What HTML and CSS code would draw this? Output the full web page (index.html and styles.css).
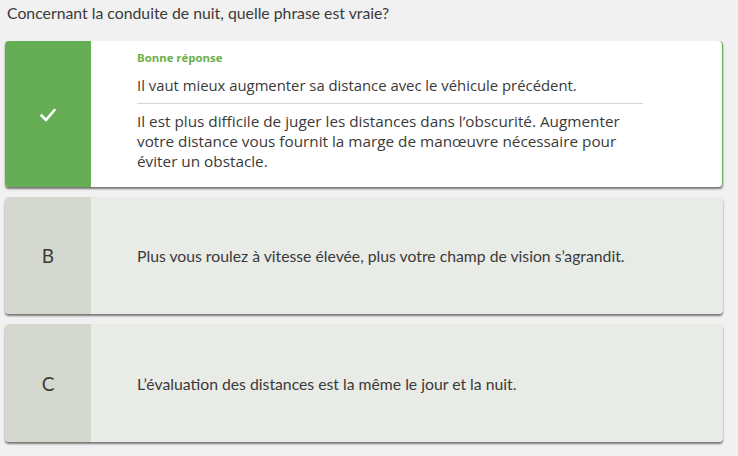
FILE: index.html
```html
<!DOCTYPE html>
<html lang="fr">
<head>
<meta charset="utf-8">
<link rel="stylesheet" href="styles.css">
</head>
<body>
<div class="page">
  <p class="question">Concernant la conduite de nuit, quelle phrase est vraie?</p>
  <div class="answers">
    <div class="card card-correct">
      <div class="side side-correct">
        <svg class="check" width="16" height="14" viewBox="0 0 16 14"><path d="M1.5 7.5 L6 12 L14.5 2" fill="none" stroke="#fff" stroke-width="2.6" stroke-linecap="round" stroke-linejoin="round"/></svg>
      </div>
      <div class="body body-correct">
        <div class="label">Bonne réponse</div>
        <div class="answer-text">Il vaut mieux augmenter sa distance avec le véhicule précédent.</div>
        <div class="sep"></div>
        <div class="explain">Il est plus difficile de juger les distances dans l’obscurité. Augmenter votre distance vous fournit la marge de manœuvre nécessaire pour éviter un obstacle.</div>
      </div>
    </div>
    <div class="card card-b">
      <div class="side">B</div>
      <div class="body"><span class="plain">Plus vous roulez à vitesse élevée, plus votre champ de vision s’agrandit.</span></div>
    </div>
    <div class="card card-c">
      <div class="side">C</div>
      <div class="body"><span class="plain">L’évaluation des distances est la même le jour et la nuit.</span></div>
    </div>
  </div>
</div>
</body>
</html>
```
FILE: styles.css
```css
html, body {
  margin: 0;
  padding: 0;
  background: #f1f1f1;
}
.page {
  width: 738px;
  height: 456px;
  font-family: Lato, "Liberation Sans", sans-serif;
  color: #333;
}
.question {
  margin: 0;
  padding: 3px 0 0 7px;
  font-size: 15.8px;
  line-height: 20px;
  color: #3a3a3a;
}
.answers {
  display: flex;
  flex-direction: column;
  gap: 10px;
  padding: 18px 0 0 5px;
  width: 718px;
}
.card {
  display: flex;
  border-radius: 4px;
  overflow: hidden;
  box-shadow: 0 2px 2px rgba(0,0,0,0.5);
  background: #e9ebe7;
}
.card-correct {
  background: #fff;
  height: 146px;
  box-shadow: 0 2px 2px rgba(0,0,0,0.5), inset -1px 0 0 #66ae55;
}
.card-b { height: 117px; }
.card-c { height: 118px; }
.side {
  width: 86px;
  flex: none;
  background: #d5d8cf;
  display: flex;
  align-items: center;
  justify-content: center;
  font-size: 19px;
  color: #3a3a3a;
}
.side-correct {
  background: #66ae55;
}
.check { margin-top: 2px; }
.body {
  flex: 1;
  padding-left: 46px;
  display: flex;
  align-items: center;
}
.plain {
  font-size: 15.75px;
  color: #3a3a3a;
}
.body-correct {
  flex-direction: column;
  align-items: flex-start;
  justify-content: flex-start;
  padding-top: 10px;
}
.label {
  font-family: "Open Sans", sans-serif;
  font-weight: 700;
  font-size: 11.4px;
  line-height: 14px;
  color: #6ab04c;
}
.answer-text, .explain {
  font-family: "Open Sans", sans-serif;
  font-size: 14.85px;
  line-height: 20px;
  color: #3a3a3a;
}
.answer-text { margin-top: 10px; }
.sep {
  width: 506px;
  height: 1px;
  background: #d8d8d0;
  margin-top: 8px;
}
.explain {
  width: 506px;
  margin-top: 7px;
  font-size: 15.3px;
}
```
